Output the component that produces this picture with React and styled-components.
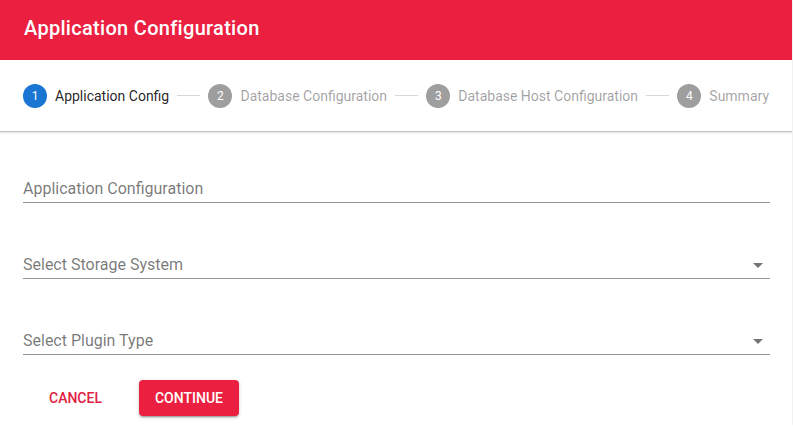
import React from "react";
import styled, { createGlobalStyle } from "styled-components";

const GlobalStyle = createGlobalStyle`
  html, body { margin: 0; padding: 0; background: #ffffff; }
  body { font-family: Roboto, "Liberation Sans", Arial, sans-serif; }
  * { box-sizing: border-box; }
`;

const Card = styled.div`
  width: 792px;
  height: 425px;
  background: #fff;
  box-shadow: 0 0 2px rgba(0, 0, 0, 0.18);
  display: flex;
  flex-direction: column;
  overflow: hidden;
`;

const Header = styled.header`
  height: 60px;
  background: #eb1f40;
  padding: 16px 24px 0;
  color: #fff;
  font-size: 20px;
  font-weight: 500;
  line-height: 24px;
  letter-spacing: 0.3px;
`;

const Stepper = styled.nav`
  height: 72px;
  display: flex;
  align-items: center;
  padding: 0 15px;
  background: #fff;
  border-bottom: 1px solid #c4c4c4;
  box-shadow: 0 1px 2px rgba(0, 0, 0, 0.12);
  position: relative;
  z-index: 1;
`;

const Step = styled.div`
  display: flex;
  align-items: center;
  padding: 0 8px;
  flex: none;
`;

const StepIcon = styled.span`
  width: 24px;
  height: 24px;
  border-radius: 50%;
  background: ${(p) => (p.$active ? "#1976d2" : "#9e9e9e")};
  color: #fff;
  font-size: 12px;
  display: flex;
  align-items: center;
  justify-content: center;
  margin-right: 8px;
`;

const StepLabel = styled.span`
  font-size: 14px;
  line-height: 20px;
  font-weight: 400;
  color: ${(p) => (p.$active ? "rgba(0,0,0,0.87)" : "rgba(0,0,0,0.38)")};
  letter-spacing: 0;
`;

const Connector = styled.span`
  flex: 1;
  height: 1px;
  background: #d6d6d6;
`;

const Form = styled.form`
  display: flex;
  flex-direction: column;
  gap: 44px;
  padding: 39px 22px 0 23px;
`;

const Field = styled.div`
  height: 32px;
  display: flex;
  align-items: flex-end;
  justify-content: space-between;
  padding-bottom: 4px;
  border-bottom: 1px solid rgba(0, 0, 0, 0.42);
`;

const FieldLabel = styled.span`
  font-size: 16px;
  line-height: 19px;
  color: rgba(0, 0, 0, 0.54);
`;

const Arrow = styled.svg`
  width: 24px;
  height: 24px;
  fill: rgba(0, 0, 0, 0.54);
  margin-bottom: -3px;
`;

const Actions = styled.div`
  display: flex;
  align-items: center;
  gap: 21px;
  padding: 25px 0 0 33px;
`;

const Button = styled.button`
  height: 36px;
  padding: 0 16px;
  min-width: 64px;
  border: none;
  border-radius: 4px;
  font-family: Roboto, "Liberation Sans", Arial, sans-serif;
  font-size: 14px;
  font-weight: 500;
  letter-spacing: 0;
  text-transform: uppercase;
  cursor: pointer;
  background: ${(p) => (p.$primary ? "#eb1f40" : "transparent")};
  color: ${(p) => (p.$primary ? "#fff" : "#e0213f")};
  box-shadow: ${(p) =>
    p.$primary
      ? "0 3px 1px -2px rgba(0,0,0,0.2), 0 2px 2px 0 rgba(0,0,0,0.14), 0 1px 5px 0 rgba(0,0,0,0.12)"
      : "none"};
`;

const steps = [
  "Application Config",
  "Database Configuration",
  "Database Host Configuration",
  "Summary",
];

const DropArrow = () => (
  <Arrow viewBox="0 0 24 24">
    <path d="M7 10l5 5 5-5z" />
  </Arrow>
);

export default function App() {
  return (
    <>
      <GlobalStyle />
      <Card>
        <Header>Application Configuration</Header>
        <Stepper>
          {steps.map((s, i) => (
            <React.Fragment key={s}>
              {i > 0 && <Connector />}
              <Step>
                <StepIcon $active={i === 0}>{i + 1}</StepIcon>
                <StepLabel $active={i === 0}>{s}</StepLabel>
              </Step>
            </React.Fragment>
          ))}
        </Stepper>
        <Form>
          <Field>
            <FieldLabel>Application Configuration</FieldLabel>
          </Field>
          <Field>
            <FieldLabel>Select Storage System</FieldLabel>
            <DropArrow />
          </Field>
          <Field>
            <FieldLabel>Select Plugin Type</FieldLabel>
            <DropArrow />
          </Field>
        </Form>
        <Actions>
          <Button type="button">Cancel</Button>
          <Button type="button" $primary>
            Continue
          </Button>
        </Actions>
      </Card>
    </>
  );
}
